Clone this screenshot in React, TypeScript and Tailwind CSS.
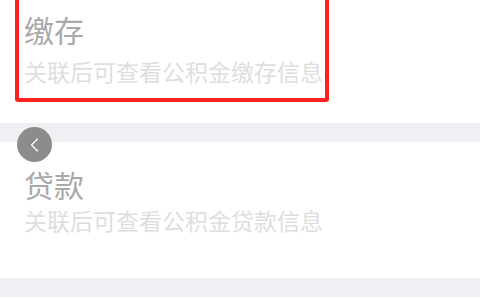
const font = { fontFamily: '"Noto Sans CJK SC", "Noto Sans", sans-serif' };

function Card({ title, desc, gap }: { title: string; desc: string; gap: string }) {
  return (
    <div className="pl-[5px]">
      <p className="text-[30px] leading-[30px] text-[#a9a9a9]">{title}</p>
      <p className={`${gap} text-[23px] leading-[23px] text-[#dedede]`}>{desc}</p>
    </div>
  );
}

export default function App() {
  return (
    <div className="relative h-[300px] w-[480px] overflow-hidden bg-white" style={font}>
      <div className="-mt-1 ml-[15px] w-[314px] rounded-[3px] border-4 border-[#ff2020] pt-[14px] pb-[15px]">
        <Card title="缴存" desc="关联后可查看公积金缴存信息" gap="mt-[16px]" />
      </div>
      <div className="mt-[21px] h-[19px] bg-[#efeff4]" />
      <div className="h-[136px] pl-[19px] pt-[27px]">
        <Card title="贷款" desc="关联后可查看公积金贷款信息" gap="mt-[10px]" />
      </div>
      <div className="h-[19px] bg-[#efeff4]" />
      <button className="absolute left-[17px] top-[127px] flex h-[35px] w-[35px] items-center justify-center rounded-full bg-[#8c8c8c]">
        <svg width="14" height="14" viewBox="0 0 14 14" fill="none">
          <path d="M9.5 1 3.5 7l6 6" stroke="white" strokeWidth="1.2" strokeLinecap="round" strokeLinejoin="round" />
        </svg>
      </button>
    </div>
  );
}
